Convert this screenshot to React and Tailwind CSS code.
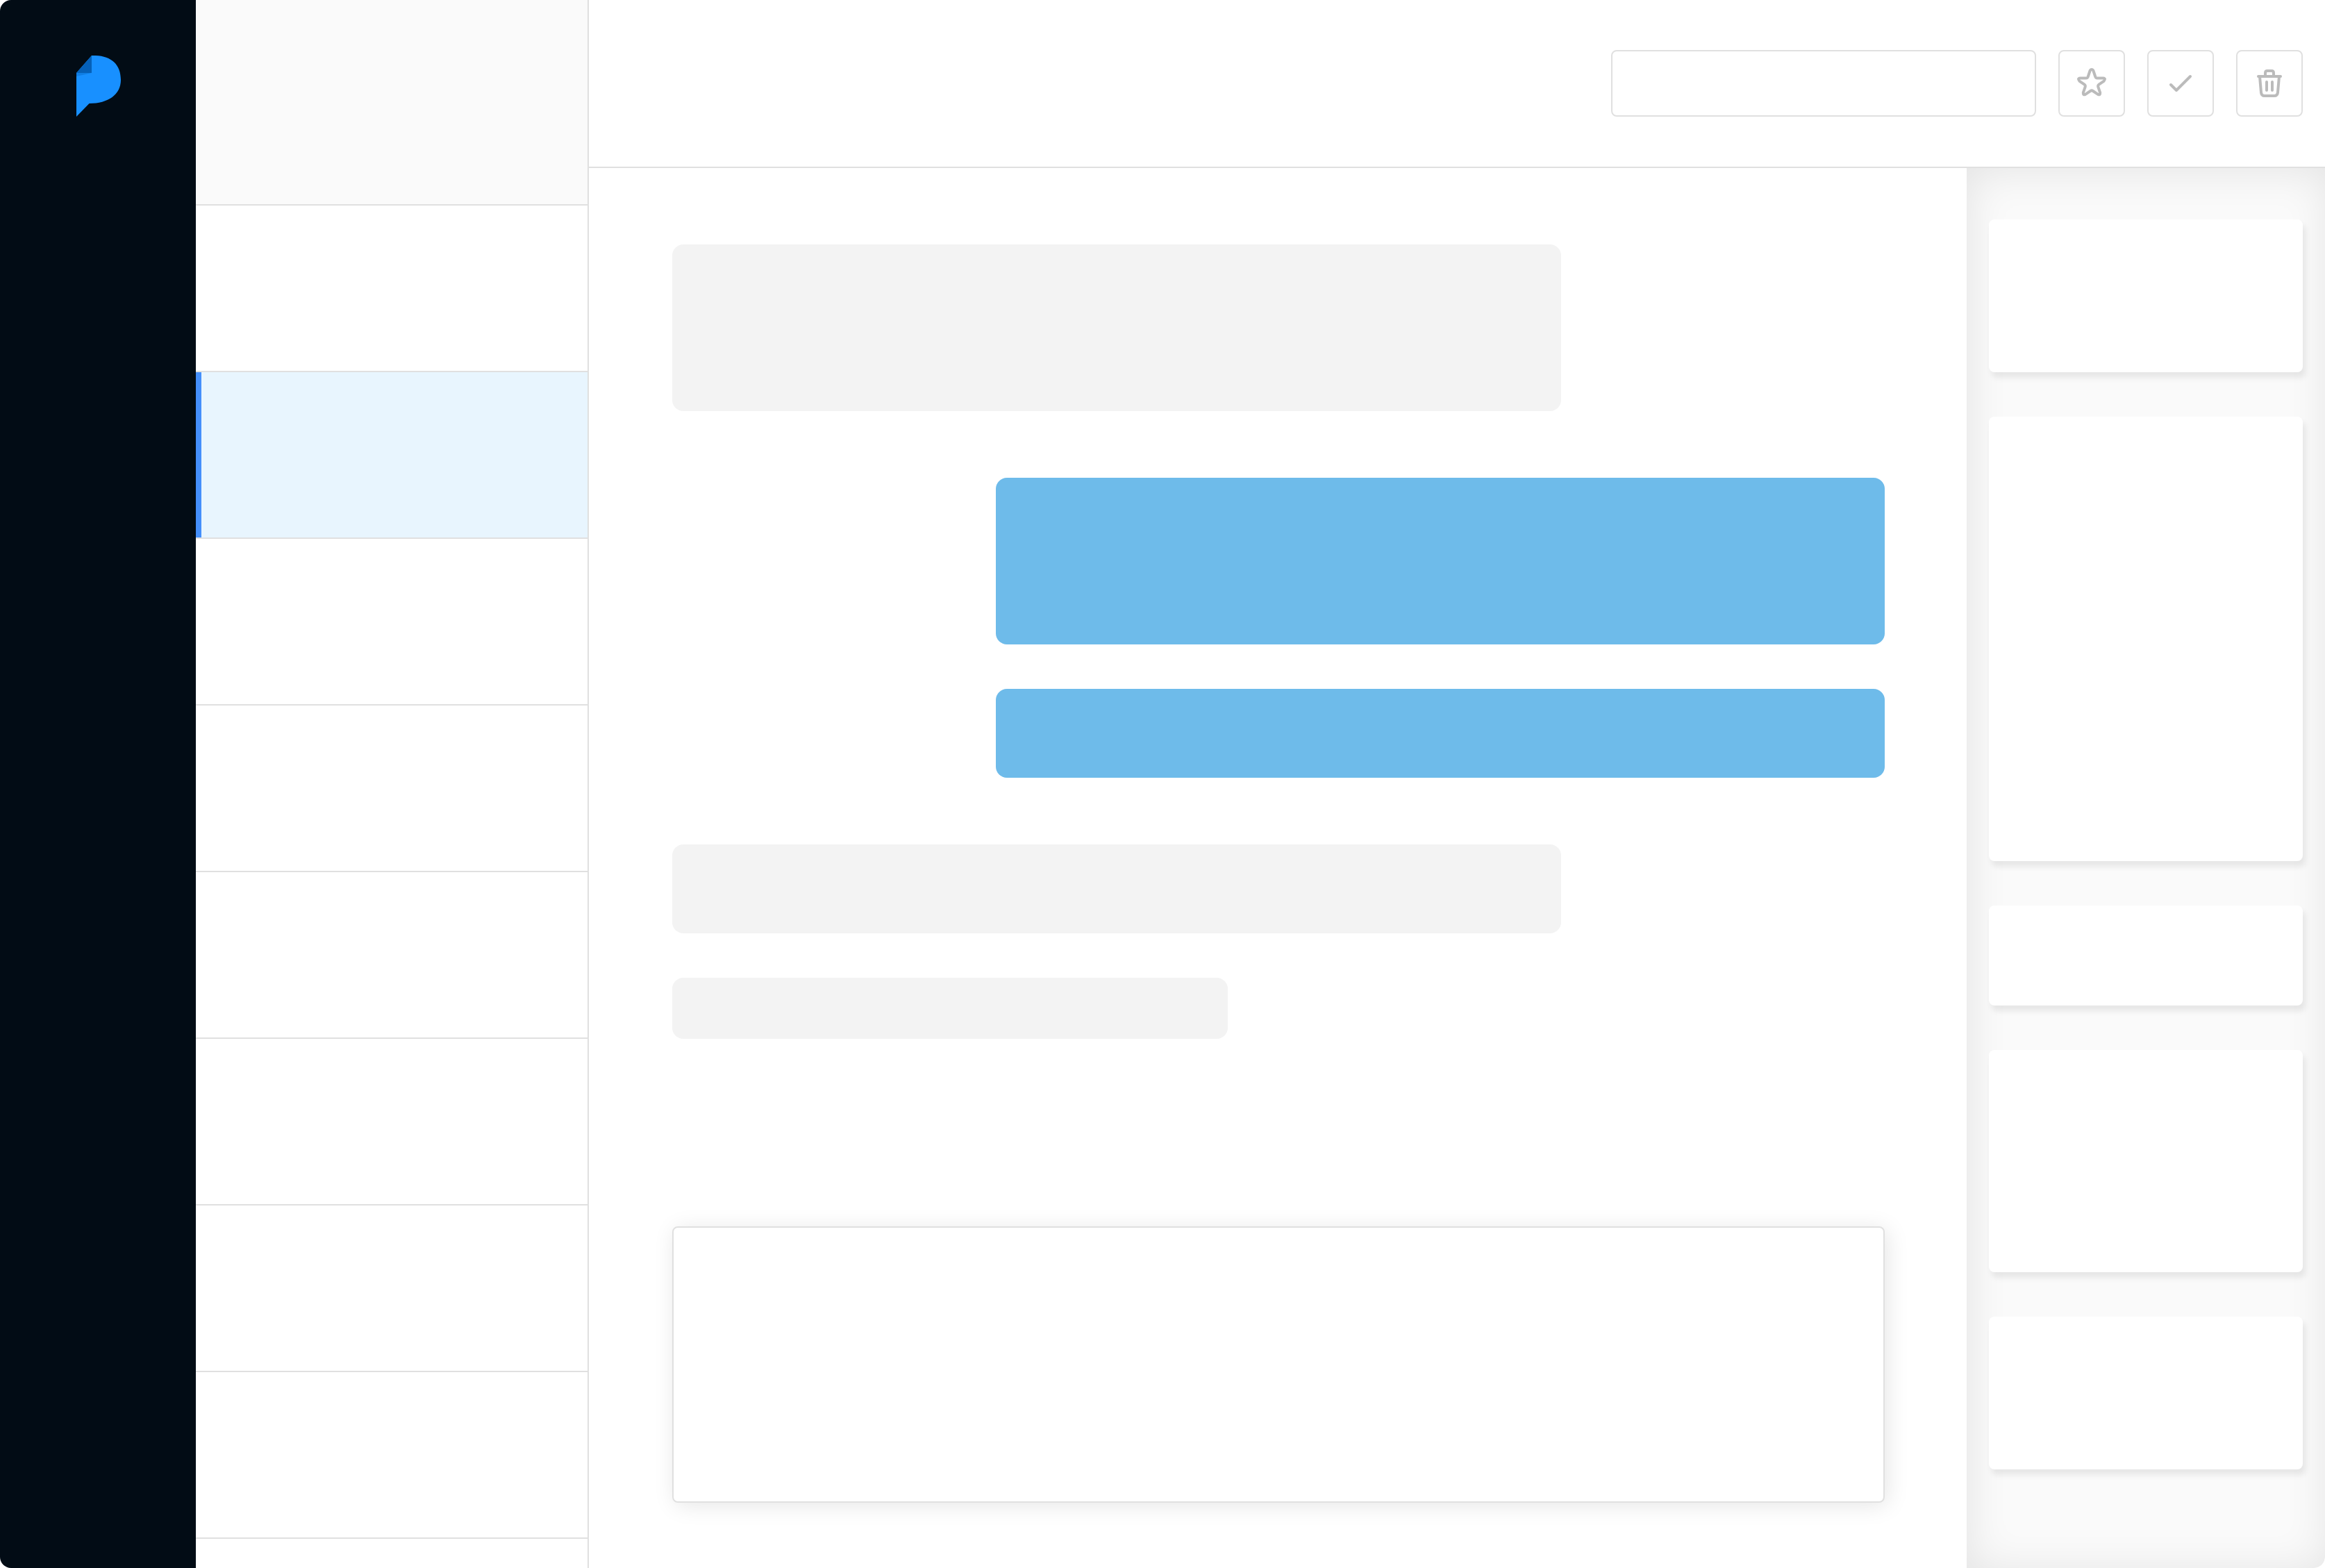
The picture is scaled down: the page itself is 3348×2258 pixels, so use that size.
const threads = [0, 1, 2, 3, 4, 5, 6, 7];

const messages = [
  "self-start w-[1280px] h-60 mt-0 bg-[#f3f3f3]",
  "self-end w-[1280px] h-60 mt-24 bg-[#6ebbea]",
  "self-end w-[1280px] h-32 mt-16 bg-[#6ebbea]",
  "self-start w-[1280px] h-32 mt-24 bg-[#f3f3f3]",
  "self-start w-[800px] h-[88px] mt-16 bg-[#f3f3f3]",
];

const cards = ["h-[220px]", "h-[640px]", "h-36", "h-80", "h-[220px]"];

function Logo() {
  return (
    <svg viewBox="0 0 64 88" className="h-[88px] w-16" aria-hidden="true">
      <path
        d="M0 25 L22 0 C48 -1 64 11 64 35 C64 56 46 69 18.500 69 L0 88 Z"
        fill="#1890ff"
      />
      <path d="M0 25 H22 L0 30 Z" fill="#0f7ee4" />
      <path d="M22 0 V25 H0 Z" fill="#0560b8" />
    </svg>
  );
}

function IconButton({ label, children }) {
  return (
    <button
      type="button"
      aria-label={label}
      className="flex size-24 shrink-0 items-center justify-center rounded-lg border-2 border-[#e0e0e0] bg-white text-[#bbbbbb]"
    >
      <svg
        viewBox="0 0 48 48"
        className="size-12"
        fill="none"
        stroke="currentColor"
        strokeWidth="4"
        strokeLinecap="round"
        strokeLinejoin="round"
        aria-hidden="true"
      >
        {children}
      </svg>
    </button>
  );
}

export default function App() {
  return (
    <div className="flex h-screen overflow-hidden rounded-2xl bg-white">
      <nav className="flex w-[282px] shrink-0 flex-col items-start bg-[#020c15] pt-20 pl-[110px]">
        <a href="#home" aria-label="Home">
          <Logo />
        </a>
      </nav>

      <section className="w-[566px] shrink-0 overflow-hidden border-r-2 border-[#e0e0e0]">
        <div className="h-[296px] border-b-2 border-[#e0e0e0] bg-[#fafafa]" />
        <ul>
          {threads.map((id) => (
            <li
              key={id}
              className="flex h-60 border-b-2 border-[#e0e0e0]"
            >
              {id === 1 && <div className="w-2 bg-[#448ffb]" />}
              <div className={id === 1 ? "flex-1 bg-[#e8f5fe]" : "flex-1 bg-white"} />
            </li>
          ))}
        </ul>
      </section>

      <div className="flex min-w-0 flex-1 flex-col">
        <header className="flex h-[242px] shrink-0 items-center justify-end gap-8 border-b-2 border-[#e0e0e0] pr-8">
          <input
            type="text"
            aria-label="Search"
            className="h-24 w-[612px] rounded-lg border-2 border-[#e0e0e0] bg-white px-6 text-3xl outline-none"
          />
          <IconButton label="Star">
            <path d="M21.700 5.500 Q24 2.500 26.300 5.500 L29.300 14.500 Q29.900 16.500 32 16.500 H40.500 Q45 17 41.500 20.800 L34.500 25.700 Q32.700 27 33.300 29.200 L36.200 37.500 Q36.500 41.500 33 39.900 L25.800 35 Q24 33.800 22.200 35 L15 39.900 Q11.500 41.500 11.800 37.500 L14.700 29.200 Q15.300 27 13.500 25.700 L6.500 20.800 Q3 17 7.500 16.500 H16 Q18.100 16.500 18.700 14.500 Z" />
          </IconButton>
          <IconButton label="Mark as done">
            <path d="M10 26 L18 34 L38 14" />
          </IconButton>
          <IconButton label="Delete">
            <path d="M8 14 H40 M10 14 L12 37 Q12.400 42 17 42 H31 Q35.600 42 36 37 L38 14 M18 14 V9 Q18 6 21 6 H27 Q30 6 30 9 V14 M20 22 V34 M28 22 V34" />
          </IconButton>
        </header>

        <div className="flex min-h-0 flex-1">
          <main className="flex min-w-0 flex-1 flex-col pt-[110px] pr-[118px] pb-[94px] pl-[120px]">
            {messages.map((look, i) => (
              <div key={i} className={`${look} max-w-full rounded-2xl`} />
            ))}
            <textarea
              aria-label="Reply"
              className="mt-auto h-[398px] w-full resize-none rounded-lg border-2 border-[#e0e0e0] bg-white p-8 text-3xl shadow-[4px_4px_32px_rgba(0,0,0,0.1)] outline-none"
            />
          </main>

          <aside className="flex w-[516px] shrink-0 flex-col gap-16 rounded-br-2xl bg-[#fafafa] px-8 pt-[74px] shadow-[inset_4px_4px_60px_rgba(0,0,0,0.09)]">
            {cards.map((height, i) => (
              <div
                key={i}
                className={`${height} shrink-0 rounded-lg bg-white shadow-[4px_8px_8px_rgba(0,0,0,0.08)]`}
              />
            ))}
          </aside>
        </div>
      </div>
    </div>
  );
}
